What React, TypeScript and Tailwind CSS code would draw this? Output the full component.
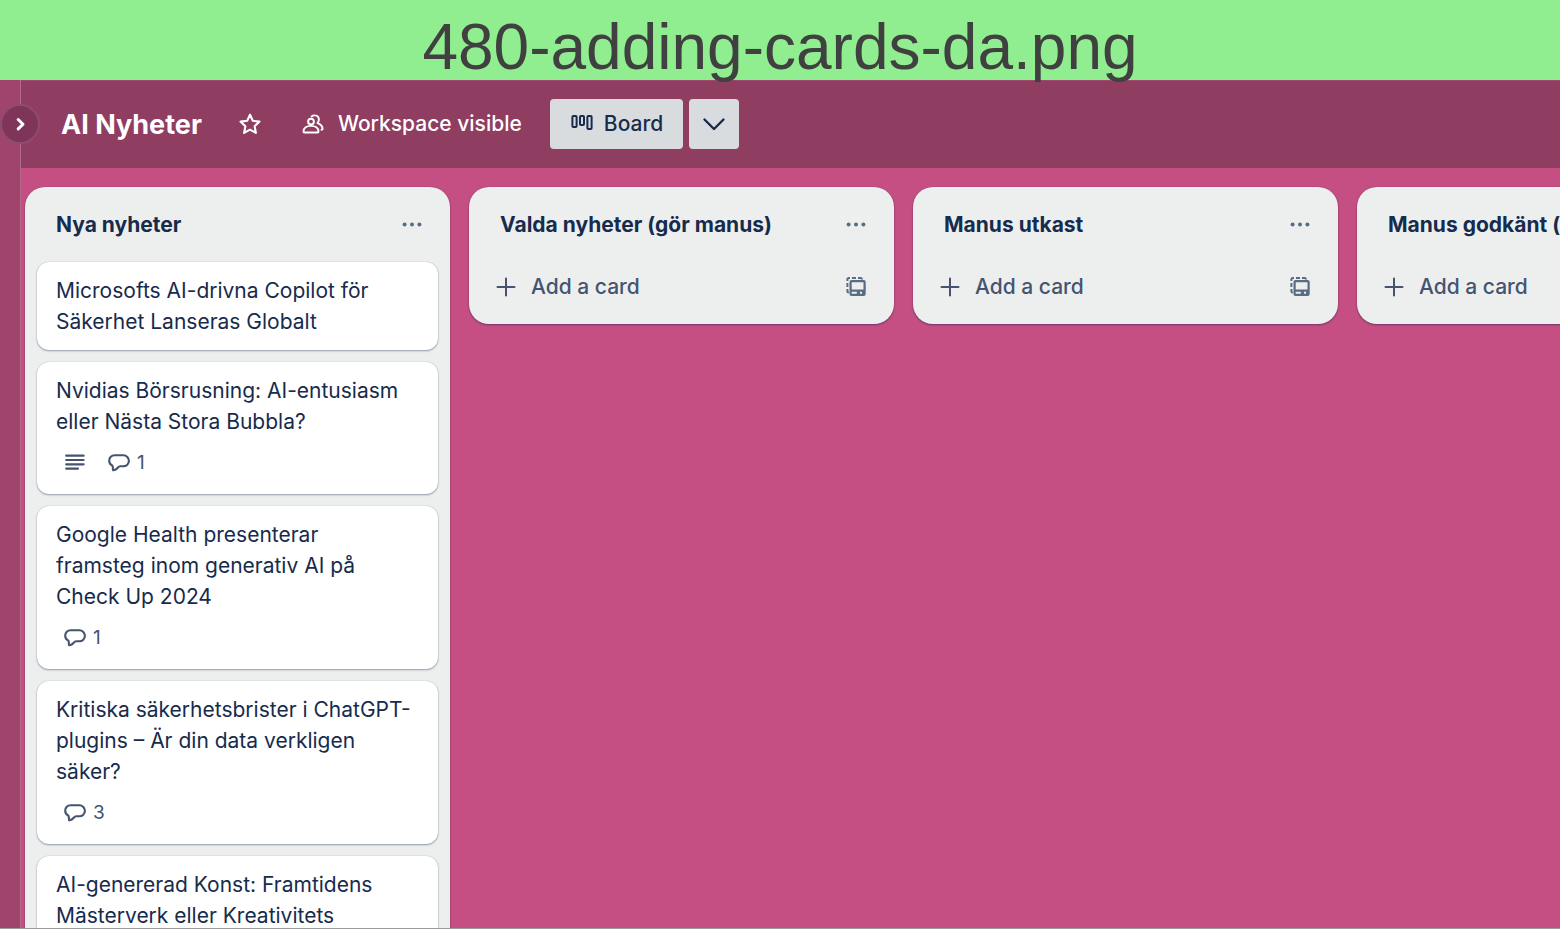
import React from "react";

type Card = { title: string; description?: boolean; comments?: number };
type List = { title: string; cards: Card[] };

const lists: List[] = [
  {
    title: "Nya nyheter",
    cards: [
      { title: "Microsofts AI-drivna Copilot för Säkerhet Lanseras Globalt" },
      { title: "Nvidias Börsrusning: AI-entusiasm eller Nästa Stora Bubbla?", description: true, comments: 1 },
      { title: "Google Health presenterar framsteg inom generativ AI på Check Up 2024", comments: 1 },
      { title: "Kritiska säkerhetsbrister i ChatGPT-plugins – Är din data verkligen säker?", comments: 3 },
      { title: "AI-genererad Konst: Framtidens Mästerverk eller Kreativitets" },
    ],
  },
  { title: "Valda nyheter (gör manus)", cards: [] },
  { title: "Manus utkast", cards: [] },
  { title: "Manus godkänt (", cards: [] },
];

function StarIcon() {
  return (
    <svg width="24" height="24" viewBox="0 0 24 24" fill="none" stroke="currentColor" strokeWidth="2.1" strokeLinejoin="round" aria-hidden="true">
      <path d="M12 2.700l2.800 6.100 6.700.8-4.900 4.600 1.300 6.700-5.900-3.200-5.900 3.200 1.300-6.700-4.900-4.600 6.700-.8z" />
    </svg>
  );
}

function PeopleIcon() {
  return (
    <svg width="24" height="24" viewBox="0 0 24 24" fill="none" stroke="currentColor" strokeWidth="1.9" strokeLinecap="round" strokeLinejoin="round" aria-hidden="true">
      <circle cx="10" cy="9.600" r="2.900" />
      <path d="M2.500 19.600c0-3.700 3.300-5.700 7.500-5.700s7.500 2 7.500 5.700c0 .6-.3.900-.9.900H3.400c-.6 0-.9-.3-.9-.9z" />
      <path d="M10.600 4.500c1-.9 2.100-1.200 3.300-1.100 2.400.2 4 1.900 4 4.200 0 1.500-.6 2.600-1.500 3.500 3 1 5 2.900 5.200 5.600 0 .8-.4 1.100-1.100 1.100" />
    </svg>
  );
}

function BoardIcon() {
  return (
    <svg width="24" height="24" viewBox="0 0 24 24" fill="none" stroke="currentColor" strokeWidth="2" aria-hidden="true">
      <rect x="2.400" y="4" width="4.200" height="11" rx="1" />
      <rect x="10" y="4" width="4" height="9" rx="1" />
      <rect x="17.400" y="4" width="4.200" height="13" rx="1" />
    </svg>
  );
}

function DotsIcon() {
  return (
    <svg width="24" height="24" viewBox="0 0 24 24" fill="currentColor" aria-hidden="true">
      <circle cx="4.600" cy="11.500" r="2" />
      <circle cx="12" cy="11.500" r="2" />
      <circle cx="19.400" cy="11.500" r="2" />
    </svg>
  );
}

function PlusIcon() {
  return (
    <svg width="24" height="24" viewBox="0 0 24 24" fill="none" stroke="currentColor" strokeWidth="2" strokeLinecap="round" aria-hidden="true">
      <path d="M12 3.500v17M3.500 12h17" />
    </svg>
  );
}

function TemplateIcon() {
  return (
    <svg width="24" height="24" viewBox="0 0 24 24" fill="none" stroke="currentColor" strokeWidth="2" aria-hidden="true">
      <path d="M3.400 6V4.600a1.500 1.500 0 0 1 1.500-1.500H6M8 3.100h4M14 3.100h2.500a1.500 1.500 0 0 1 1.500 1.500M3.400 8v4M3.400 14v2a1.500 1.500 0 0 0 1.500 1.500" />
      <path fillRule="evenodd" stroke="none" fill="currentColor" d="M7.500 5h12.200a2 2 0 0 1 2 2v12a2 2 0 0 1-2 2H7.500a2 2 0 0 1-2-2V7a2 2 0 0 1 2-2zm.2 2.200v7.300h11.800V7.200zm0 9.500v2h5.100v-2zm8.300 0v2h2v-2z" />
    </svg>
  );
}

function DescriptionIcon() {
  return (
    <svg width="24" height="24" viewBox="0 0 24 24" fill="none" stroke="currentColor" strokeWidth="2.2" strokeLinecap="round" aria-hidden="true">
      <path d="M3.200 4.700h17.400M3.200 9h17.400M3.200 13.300h17.400M3.200 17.600h11.800" />
    </svg>
  );
}

function CommentIcon() {
  return (
    <svg width="24" height="24" viewBox="0 0 24 24" fill="none" stroke="currentColor" strokeWidth="2.1" strokeLinejoin="round" aria-hidden="true">
      <path d="M7.600 4.300h8.800a5.200 5.200 0 0 1 0 11h-3.200c-1.300 0-1.900.8-2.700 1.700-.9 1.100-2 2-3.900 2.200-.6.100-.8-.2-.7-.8.100-1.100.1-2.400-.5-3.700C3.600 13.700 2.200 12.100 2.200 9.700c0-3.100 2.300-5.400 5.400-5.400z" />
    </svg>
  );
}

function CardItem({ card }: { card: Card }) {
  const hasBadges = card.description || card.comments !== undefined;
  return (
    <li className="rounded-xl bg-white py-[13px] pr-[26px] pl-[19px] shadow-[0_1px_2px_#091e4260,0_0_1px_#091e424f]">
      <a href="#" className="block text-[21px] leading-[31px] text-[#172b4d]">
        {card.title}
      </a>
      {hasBadges && (
        <div className="mt-3 mb-1 flex h-7 items-center gap-5 pl-[7px] text-[#44546f]">
          {card.description && <DescriptionIcon />}
          {card.comments !== undefined && (
            <span className="flex items-center gap-[6px] text-[19px]">
              <CommentIcon />
              {card.comments}
            </span>
          )}
        </div>
      )}
    </li>
  );
}

function ListColumn({ list }: { list: List }) {
  const empty = list.cards.length === 0;
  return (
    <section className="w-[425px] shrink-0 rounded-[20px] bg-[#edefef] pb-3 shadow-[0_1px_2px_#091e4270,0_0_1px_#091e424f]">
      <header className="flex h-[75px] items-center justify-between pr-[26px] pl-[31px]">
        <h2 className="text-[21px] font-bold whitespace-nowrap text-[#172b4d]">{list.title}</h2>
        <button type="button" aria-label="List actions" className="text-[#5a6b84]">
          <DotsIcon />
        </button>
      </header>
      {empty ? (
        <div className="flex h-[50px] items-center justify-between pr-[26px] pl-[25px] text-[#44546f]">
          <button type="button" className="flex items-center gap-[13px] text-[21px] font-medium">
            <PlusIcon />
            Add a card
          </button>
          <button type="button" aria-label="Create from template" className="text-[#5a6b84]">
            <TemplateIcon />
          </button>
        </div>
      ) : (
        <ul className="flex flex-col gap-3 px-3">
          {list.cards.map((card) => (
            <CardItem key={card.title} card={card} />
          ))}
        </ul>
      )}
    </section>
  );
}

export default function App() {
  return (
    <div className="flex h-screen flex-col overflow-hidden border-b border-[#999c9e] bg-[#c54f82] font-['Inter',sans-serif]">
      <div className="relative z-10 flex h-20 shrink-0 items-center justify-center bg-[#90ee90] pt-[14px] font-['Liberation_Sans',sans-serif] text-[64px] leading-none text-[#404040]">
        480-adding-cards-da.png
      </div>
      <div className="flex min-h-0 flex-1">
        <aside className="relative w-[21px] shrink-0 border-r border-[#b56b8e] bg-[#a0446c]">
          <button
            type="button"
            aria-label="Expand sidebar"
            className="absolute top-6 left-0 z-10 flex size-10 items-center justify-center rounded-full border-2 border-[#8f4c70] bg-[#7f3558] text-white"
          >
            <svg width="24" height="24" viewBox="0 0 24 24" fill="none" stroke="currentColor" strokeWidth="3" strokeLinecap="round" strokeLinejoin="round" aria-hidden="true">
              <path d="M10.200 7.500l4.800 4.700-4.800 4.700" />
            </svg>
          </button>
        </aside>
        <main className="flex min-w-0 flex-1 flex-col">
          <header className="flex h-[88px] shrink-0 items-center border-t border-[#a1486f] bg-[#8f3d61] pb-[2px] pl-10 text-white">
            <h1 className="pt-[2px] text-[27px] leading-8 font-bold whitespace-nowrap">AI Nyheter</h1>
            <button type="button" aria-label="Star board" className="ml-9">
              <StarIcon />
            </button>
            <button type="button" className="ml-[39px] flex items-center gap-[13px] text-[21px] font-medium whitespace-nowrap">
              <PeopleIcon />
              Workspace visible
            </button>
            <button type="button" className="ml-[28px] flex h-[50px] items-center gap-[10px] rounded bg-[#d8dcdf] px-5 text-[21px] font-medium text-[#172b4d]">
              <BoardIcon />
              Board
            </button>
            <button type="button" aria-label="Change view" className="ml-[6px] flex h-[50px] w-[50px] items-center justify-center rounded bg-[#d8dcdf] text-[#172b4d]">
              <svg width="24" height="24" viewBox="0 0 24 24" fill="none" stroke="currentColor" strokeWidth="2.400" strokeLinecap="round" strokeLinejoin="round" aria-hidden="true">
                <path d="M2.500 7.500l9.500 9.500 9.500-9.500" />
              </svg>
            </button>
          </header>
          <div className="flex min-h-0 flex-1 items-start gap-[19px] overflow-hidden pt-[19px] pl-1">
            {lists.map((list) => (
              <ListColumn key={list.title} list={list} />
            ))}
          </div>
        </main>
      </div>
    </div>
  );
}
